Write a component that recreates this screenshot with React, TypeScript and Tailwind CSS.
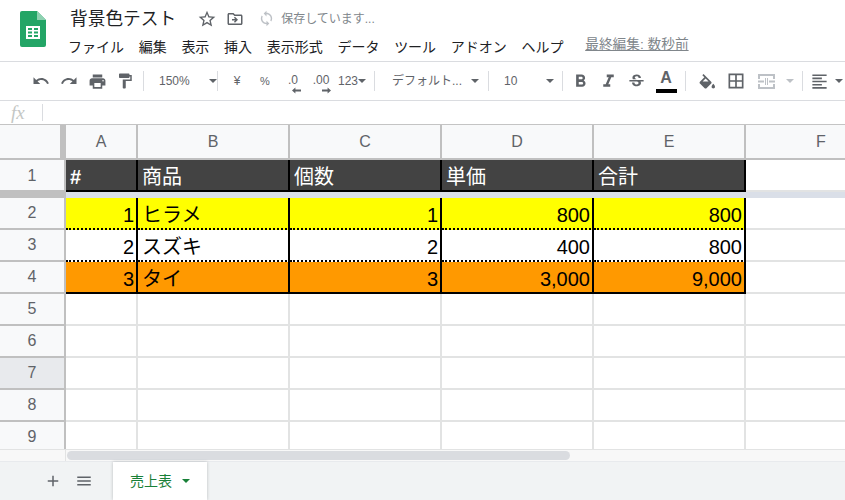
import React from "react";
import {
  MdAdd,
  MdBorderAll,
  MdFormatAlignLeft,
  MdFormatBold,
  MdFormatItalic,
  MdFormatPaint,
  MdMenu,
  MdOutlineDriveFileMove,
  MdPrint,
  MdRedo,
  MdStarBorder,
  MdStrikethroughS,
  MdSync,
  MdUndo,
} from "react-icons/md";

const menus = ["ファイル", "編集", "表示", "挿入", "表示形式", "データ", "ツール", "アドオン", "ヘルプ"];
const columns = ["A", "B", "C", "D", "E", "F"];
const header = ["#", "商品", "個数", "単価", "合計"];

const rows = [
  { n: 2, bg: "bg-[#ffff00]", border: "border-dotted border-black", cells: ["1", "ヒラメ", "1", "800", "800"] },
  { n: 3, bg: "bg-white", border: "border-dotted border-black", cells: ["2", "スズキ", "2", "400", "800"] },
  { n: 4, bg: "bg-[#ff9900]", border: "border-solid border-black", cells: ["3", "タイ", "3", "3,000", "9,000"] },
];

function Sep() {
  return <div className="w-px h-[20px] bg-[#dadce0] shrink-0" />;
}

function Caret({ color = "border-t-[#5f6368]" }: { color?: string }) {
  return <div className={`w-0 h-0 border-x-[4px] border-x-transparent border-t-[4px] ${color}`} />;
}

function Btn({ children, w = "w-[28px]" }: { children: React.ReactNode; w?: string }) {
  return <div className={`${w} h-[28px] shrink-0 flex items-center justify-center text-[#5f6368]`}>{children}</div>;
}

function Decimal({ label, dir }: { label: string; dir: "left" | "right" }) {
  return (
    <div className="w-[28px] h-[28px] shrink-0 flex flex-col items-center text-[#5f6368]">
      <span className="text-[12px] leading-[15px] mt-[6px] font-medium">{label}</span>
      <svg width="9" height="7" viewBox="0 0 9 7" className={dir === "left" ? "ml-[6px] -mt-[1px]" : "ml-[10px] -mt-[1px]"}>
        {dir === "left" ? (
          <path d="M9 2.500H3.400V0.500L0 3.500l3.400 3V4.500H9z" fill="#5f6368" />
        ) : (
          <path d="M0 2.500h5.600V0.500L9 3.500l-3.400 3V4.500H0z" fill="#5f6368" />
        )}
      </svg>
    </div>
  );
}

function Logo() {
  return (
    <svg width="26" height="36" viewBox="0 0 26 36" className="shrink-0">
      <path d="M2 0h15l9 9v25a2 2 0 0 1-2 2H2a2 2 0 0 1-2-2V2a2 2 0 0 1 2-2z" fill="#23a566" />
      <path d="M17 0l9 9h-9z" fill="#8ed1b1" />
      <path d="M6 15h14v13H6z" fill="#fff" />
      <path d="M8 17h4v2H8zM14 17h4v2h-4zM8 20.500h4v2H8zM14 20.500h4v2h-4zM8 24h4v2H8zM14 24h4v2h-4z" fill="#23a566" />
    </svg>
  );
}

function MergeIcon() {
  return (
    <svg width="17" height="15" viewBox="0 0 17 15" fill="#bdc1c6">
      <path d="M0 0h17v2H0zM0 13h17v2H0zM0 2h2v3H0zM15 2h2v3h-2zM0 10h2v3H0zM15 10h2v3h-2zM0 6.500h6v2H0zM11 6.500h6v2h-6zM7 4h1v7H7zM9 4h1v7H9z" />
    </svg>
  );
}

function FillIcon() {
  return (
    <svg width="18" height="15" viewBox="0 0 21 17.500" fill="#5f6368">
      <path
        fillRule="evenodd"
        d="M16.560 8.940L7.620 0 6.210 1.410l2.380 2.380-5.150 5.150c-.59.590-.59 1.540 0 2.120l5.500 5.500c.29.290.68.440 1.060.440s.77-.150 1.060-.440l5.500-5.500c.59-.580.59-1.530 0-2.120zM10 5.210L6.500 8.700h7z"
      />
      <path d="M19 11.500s-2 2.170-2 3.500c0 1.100.9 2 2 2s2-.9 2-2c0-1.330-2-3.500-2-3.500z" />
    </svg>
  );
}

export default function App() {
  return (
    <div className="w-[845px] h-[500px] overflow-hidden flex flex-col bg-white text-black font-['Liberation_Sans','Noto_Sans_CJK_JP',sans-serif]">
      {/* Title + menu */}
      <div className="h-[62px] shrink-0 flex border-b border-[#dadce0]">
        <div className="pl-[20px] pt-[11px] w-[68px] shrink-0">
          <Logo />
        </div>
        <div className="flex flex-col">
          <div className="h-[30px] pt-[7px] flex items-center">
            <span className="ml-[2px] text-[17.700px] leading-[24px] text-[#202124]">背景色テスト</span>
            <MdStarBorder className="ml-[21px] text-[#5f6368]" size={20} />
            <MdOutlineDriveFileMove className="ml-[9px] text-[#5f6368]" size={18} />
            <MdSync className="ml-[14px] text-[#bdc1c6]" size={17} />
            <span className="ml-[6px] text-[12px] text-[#80868b]">保存しています...</span>
          </div>
          <div className="h-[24px] mt-[5px] flex items-center gap-[14.700px] text-[14px] text-[#202124]">
            {menus.map((m) => (
              <span key={m}>{m}</span>
            ))}
            <span className="ml-[7px] mb-[3px] text-[13.700px] text-[#80868b] underline">最終編集: 数秒前</span>
          </div>
        </div>
      </div>

      {/* Toolbar */}
      <div className="h-[39px] shrink-0 flex items-center pl-[27px] border-b border-[#dadce0] text-[12px] text-[#5f6368]">
        <Btn><MdUndo size={18} /></Btn>
        <Btn><MdRedo size={18} /></Btn>
        <Btn><MdPrint size={19} /></Btn>
        <Btn><MdFormatPaint size={18} /></Btn>
        <div className="w-[4px] shrink-0" />
        <Sep />
        <div className="w-[73px] shrink-0 flex items-center pl-[15px]">
          <span className="w-[57px]">150%</span>
          <Caret />
        </div>
        <Sep />
        <div className="w-[5px] shrink-0" />
        <Btn><span className="font-medium text-[12px]">¥</span></Btn>
        <Btn><span className="text-[11px]">%</span></Btn>
        <Decimal label=".0" dir="left" />
        <Decimal label=".00" dir="right" />
        <div className="w-[38px] shrink-0 flex items-center pl-[3px]">
          <span>123</span>
          <Caret />
        </div>
        <div className="w-[1px] shrink-0" />
        <Sep />
        <div className="w-[113px] shrink-0 flex items-center pl-[17px]">
          <span className="w-[79px] whitespace-nowrap">デフォルト...</span>
          <Caret />
        </div>
        <Sep />
        <div className="w-[73px] shrink-0 flex items-center pl-[15px]">
          <span className="w-[42px]">10</span>
          <Caret />
        </div>
        <Sep />
        <div className="w-[3px] shrink-0" />
        <Btn><MdFormatBold size={21} /></Btn>
        <Btn><MdFormatItalic size={21} /></Btn>
        <Btn><MdStrikethroughS size={19} /></Btn>
        <div className="w-[30px] h-[28px] ml-[1px] shrink-0 flex flex-col items-center">
          <span className="text-[16px] leading-[20px] mt-[1px] font-bold">A</span>
          <div className="w-[21px] h-[4px] mt-[1px] bg-black" />
        </div>
        <div className="w-[4px] shrink-0" />
        <Sep />
        <div className="w-[5px] shrink-0" />
        <Btn w="w-[30px]"><FillIcon /></Btn>
        <Btn w="w-[30px]"><MdBorderAll size={20} /></Btn>
        <Btn w="w-[30px]"><MergeIcon /></Btn>
        <div className="w-[18px] flex justify-center shrink-0">
          <Caret color="border-t-[#bdc1c6]" />
        </div>
        <div className="w-[3px] shrink-0" />
        <Sep />
        <Btn w="w-[32px]"><MdFormatAlignLeft size={19} /></Btn>
        <Caret />
      </div>

      {/* Formula bar */}
      <div className="h-[24px] shrink-0 flex items-center border-b border-[#c4c4c4]">
        <span className="ml-[11px] w-[31px] text-[19px] leading-[22px] italic text-[#c4c7c5] font-['Liberation_Serif',serif]">fx</span>
        <div className="w-px h-[17px] bg-[#dadce0]" />
      </div>

      {/* Sheet */}
      <div className="grid grid-cols-[66px_72px_152px_152px_152px_152px_152px] grid-rows-[35px_32px_6px_32px_32px_32px_32px_32px_32px_32px_32px] shrink-0 h-[324px] overflow-hidden">
        <div className="bg-[#f8f9fa] border-b-2 border-[#c0c0c0] flex justify-end">
          <div className="w-[6px] bg-[#c0c0c0]" />
        </div>
        {columns.map((c) => (
          <div
            key={c}
            className="bg-[#f8f9fa] border-r-2 border-b-2 border-[#c0c0c0] flex items-center justify-center pt-[1px] text-[16px] text-[#5f6368]"
          >
            {c}
          </div>
        ))}

        <div className="bg-[#f8f9fa] border-r-2 border-b-2 border-[#c0c0c0] flex items-center justify-center pt-[1px] text-[16px] text-[#5f6368]">1</div>
        {header.map((h, i) => (
          <div
            key={h}
            className={`bg-[#434343] border-r-2 border-b-2 border-black flex items-center pl-[4px] pt-[3px] text-[20px] text-white ${i === 0 ? "font-bold" : ""}`}
          >
            {h}
          </div>
        ))}
        <div className="border-b-2 border-[#e2e3e3]" />

        <div className="bg-[#c0c0c0]" />
        <div className="col-span-6 bg-[#dadfe8]" />

        {rows.map((r) => (
          <React.Fragment key={r.n}>
            <div className="bg-[#f8f9fa] border-r-2 border-b-2 border-[#c0c0c0] flex items-center justify-center text-[16px] text-[#5f6368]">{r.n}</div>
            {r.cells.map((c, i) => (
              <div
                key={i}
                className={`${r.bg} border-b-2 ${r.border} relative flex items-center pt-[3px] text-[20px] ${i === 1 ? "pl-[4px]" : "justify-end pr-[4px]"}`}
              >
                {c}
                <div className="absolute right-0 top-0 -bottom-[2px] w-[2px] bg-black" />
              </div>
            ))}
            <div className="border-r-2 border-b-2 border-[#e2e3e3]" />
          </React.Fragment>
        ))}

        {[5, 6, 7, 8, 9].map((n) => (
          <React.Fragment key={n}>
            <div
              className={`${n === 7 ? "bg-[#e8eaed]" : "bg-[#f8f9fa]"} border-r-2 border-b-2 border-[#c0c0c0] flex items-center justify-center text-[16px] text-[#5f6368]`}
            >
              {n}
            </div>
            {columns.map((c) => (
              <div key={c} className="border-r-2 border-b-2 border-[#e2e3e3]" />
            ))}
          </React.Fragment>
        ))}
      </div>

      {/* Horizontal scrollbar */}
      <div className="h-[12px] shrink-0 flex border-t border-[#e2e3e3] bg-[#f8f8f8]">
        <div className="w-[66px] shrink-0 border-r border-[#e2e3e3]" />
        <div className="w-[503px] h-[9px] ml-px mt-px rounded-full bg-[#dadce0]" />
      </div>

      {/* Tabs */}
      <div className="flex-1 flex bg-[#f1f3f4] border-t border-[#e8eaed]">
        <div className="w-[113px] shrink-0 flex items-center text-[#5f6368]">
          <MdAdd className="ml-[44px]" size={18} />
          <MdMenu className="ml-[13px]" size={18} />
        </div>
        <div className="w-[94px] shrink-0 bg-white shadow-[0_0_3px_rgba(60,64,67,0.3)] flex items-center pl-[17px]">
          <span className="text-[14px] text-[#188038]">売上表</span>
          <div className="ml-[10px]">
            <Caret color="border-t-[#188038]" />
          </div>
        </div>
      </div>
    </div>
  );
}
